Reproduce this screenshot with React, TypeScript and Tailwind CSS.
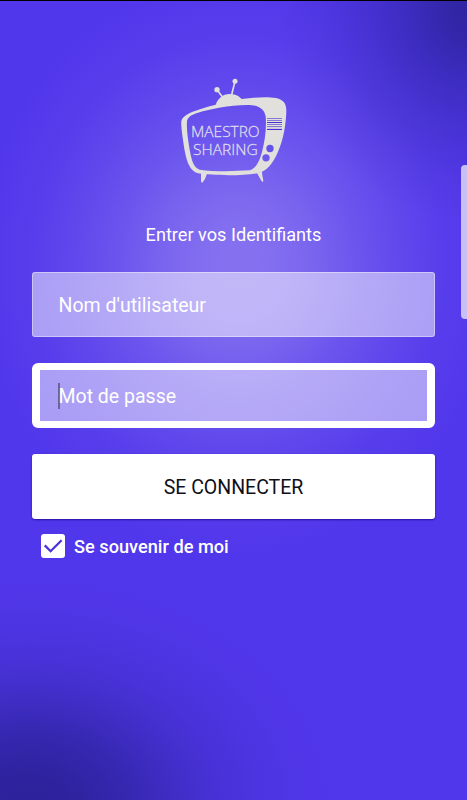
function TvLogo() {
  return (
    <svg className="ml-[2px] block h-[120px] w-[130px]" viewBox="0 0 390 360" role="img" aria-label="Maestro Sharing">
      <g fill="#e1e0dd">
        <path
          fillRule="evenodd"
          d="M34 153 C38 137 62 127 90 118 C106 112 121 108 137 104 C145 84 158 73 179 72 C199 72 210 81 215 87 C252 82 290 79 318 84 C341 89 349 101 349 122 C348 162 341 207 324 245 C309 280 291 302 265 309 C221 318 132 317 84 310 C61 304 51 278 45 247 C39 212 32 166 34 153 Z M51 154 C49 178 55 216 61 250 C66 276 73 294 89 299 C132 305 190 304 240 301 C257 295 268 276 276 246 C285 211 290 174 287 139 C282 116 266 105 230 105 C178 106 121 117 84 128 C64 134 52 142 51 154 Z"
        />
        <path d="M93 309 L111 311 C107 323 102 333 96 339 L93 334 Z" />
        <path d="M261 309 L276 305 C276 315 279 324 280 333 L277 336 C271 328 267 319 261 309 Z" />
        <circle cx="141" cy="59" r="8" />
        <circle cx="195" cy="34" r="7.5" />
      </g>
      <path d="M141 59 L157 80 M195 34 L184 78" stroke="#e1e0dd" strokeWidth="5" fill="none" />
      <path d="M291 145.5 H336 M291 151.5 H336 M291 163.5 H336 M291 169.5 H336" stroke="#8577d6" strokeWidth="3" />
      <path d="M291 157.5 H336 M291 178.5 H336" stroke="#4a2fd6" strokeWidth="3" />
      <path d="M291 174.5 H336" stroke="#b5abdc" strokeWidth="2" />
      <circle cx="300" cy="235.5" r="11" fill="#6552ea" />
      <circle cx="288" cy="263.5" r="11" fill="#6d5aeb" />
      <g fill="#dedcec" stroke="#dedcec" strokeWidth="0.9" fontFamily="'Open Sans', sans-serif" fontWeight="300" fontSize="46">
        <text x="63" y="201" textLength="206" lengthAdjust="spacingAndGlyphs">MAESTRO</text>
        <text x="69" y="256" textLength="194" lengthAdjust="spacingAndGlyphs">SHARING</text>
      </g>
    </svg>
  );
}

export default function App() {
  return (
    <main className="relative flex h-[800px] w-[467px] flex-col overflow-hidden border-t border-black bg-[#5137eb] bg-[radial-gradient(ellipse_200px_215px_at_102%_1%,#2e249f_0%,#2e249fd8_16%,#2e249f90_34%,#2e249f50_55%,#2e249f1c_78%,#2e249f00_100%),radial-gradient(ellipse_310px_235px_at_6%_101%,#2b2198_0%,#2b2198e4_17%,#2b2198b0_33%,#2b219874_47%,#2b219840_61%,#2b219818_79%,#2b219800_100%),radial-gradient(ellipse_260px_290px_at_51%_33%,#8672f0_0%,#8672f0ec_15%,#8672f0c0_30%,#8672f084_45%,#8672f04a_62%,#8672f01a_80%,#8672f000_100%)] font-['Roboto',sans-serif] text-white">
      <header className="flex flex-col items-center pt-[69px]">
        <TvLogo />
        <h1 className="mt-[31px] text-[18.15px] leading-7 font-normal">Entrer vos Identifiants</h1>
      </header>
      <form className="mt-[23px] flex flex-col px-8">
        <div className="flex h-[65px] w-[403px] items-center rounded-[3px] border border-white/40 bg-white/50 pl-[25.5px] text-[19.5px]">
          <span className="translate-y-px">Nom d'utilisateur</span>
        </div>
        <div className="mt-[26px] flex h-[65px] w-[403px] items-center rounded-[6px] border-x-8 border-y-[7px] border-white">
          <div className="flex h-full w-full items-center bg-white/50 pl-[18px] text-[19.5px]">
            <span className="-mr-px h-[26px] w-[1.5px] bg-[#6c6298]" />
            <span className="translate-y-px">Mot de passe</span>
          </div>
        </div>
        <button type="button" className="mt-[26px] h-[65px] w-[403px] rounded-[3px] bg-white pt-[2px] text-[19.5px] text-[#101018] shadow-[0_1px_2px_#2410a0]">
          SE CONNECTER
        </button>
        <label className="mt-[14px] ml-[9px] flex items-center gap-[9px] text-[18.2px] font-medium">
          <span className="flex size-6 -translate-y-px items-center justify-center rounded-[3px] bg-white">
            <svg viewBox="0 0 24 24" className="size-6" fill="none" stroke="#4a32dc" strokeWidth="2.3">
              <path d="M3.8 11.4 L9.6 17.2 L20.6 6.2" />
            </svg>
          </span>
          Se souvenir de moi
        </label>
      </form>
      <div className="absolute top-[164px] right-0 h-[154px] w-[6px] rounded-l-[4px] bg-[#c8bff5]" />
    </main>
  );
}
